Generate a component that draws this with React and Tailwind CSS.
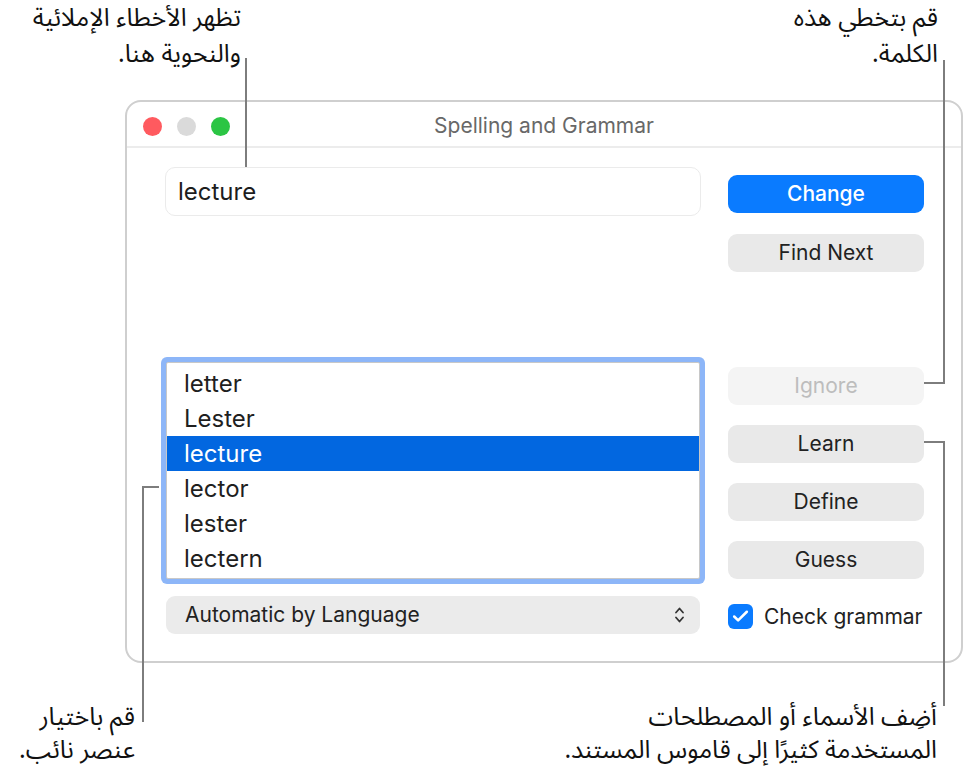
import { Check } from "lucide-react";

const ui = { fontFamily: "Inter, 'Liberation Sans', sans-serif" };
const ar = { fontFamily: "'Noto Sans Arabic', 'DejaVu Sans', sans-serif" };

const suggestions = ["letter", "Lester", "lecture", "lector", "lester", "lectern"];

function MacButton({ children, primary, disabled, className = "" }) {
  let tone = "bg-[#e9e9e9] text-[#222]";
  if (primary) tone = "bg-[#0a7bff] text-white font-medium";
  if (disabled) tone = "bg-[#f4f4f4] text-[#bdbdbd]";

  return (
    <div
      className={`flex h-[38px] w-[196px] items-center justify-center rounded-[9px] text-[21px] ${tone} ${className}`}
    >
      {children}
    </div>
  );
}

function Callouts() {
  return (
    <div className="pointer-events-none absolute inset-0" style={ar}>
      {/* labels */}
      <div dir="rtl" className="absolute right-[727px] top-0 text-right text-[25px] leading-[36px] text-[#111]">
        <p>تظهر الأخطاء الإملائية</p>
        <p>والنحوية هنا.</p>
      </div>
      <div dir="rtl" className="absolute right-[30px] top-0 text-right text-[25px] leading-[36px] text-[#111]">
        <p>قم بتخطي هذه</p>
        <p>الكلمة.</p>
      </div>
      <div dir="rtl" className="absolute right-[833px] top-[701px] text-right text-[25px] leading-[33px] text-[#111]">
        <p>قم باختيار</p>
        <p>عنصر نائب.</p>
      </div>
      <div dir="rtl" className="absolute right-[31px] top-[701px] text-right text-[25px] leading-[33px] text-[#111]">
        <p>أضِف الأسماء أو المصطلحات</p>
        <p>المستخدمة كثيرًا إلى قاموس المستند.</p>
      </div>

      {/* leader lines */}
      <div className="absolute left-[245px] top-[58px] h-[109px] w-[2px] bg-[#7d7d7d]" />
      <div className="absolute left-[943px] top-[60px] h-[324px] w-[2px] bg-[#7d7d7d]" />
      <div className="absolute left-[924px] top-[382px] h-[2px] w-[21px] bg-[#7d7d7d]" />
      <div className="absolute left-[924px] top-[441px] h-[2px] w-[21px] bg-[#7d7d7d]" />
      <div className="absolute left-[943px] top-[441px] h-[265px] w-[2px] bg-[#7d7d7d]" />
      <div className="absolute left-[142px] top-[486px] h-[2px] w-[17px] bg-[#7d7d7d]" />
      <div className="absolute left-[142px] top-[486px] h-[236px] w-[2px] bg-[#7d7d7d]" />
    </div>
  );
}

export default function App() {
  return (
    <div className="relative h-[771px] w-[968px] overflow-hidden bg-white pl-[125px] pt-[100px]" style={ui}>
      <div className="flex h-[563px] w-[838px] flex-col rounded-[16px] border-2 border-[#cfcfcf] bg-white">
        {/* title bar */}
        <div className="relative flex h-[46px] items-center border-b-2 border-[#ececec] pl-[16px] pt-[4px]">
          <div className="flex gap-[15px]">
            <span className="h-[19px] w-[19px] rounded-full bg-[#ff5a5f]" />
            <span className="h-[19px] w-[19px] rounded-full bg-[#dadada]" />
            <span className="h-[19px] w-[19px] rounded-full bg-[#2bc544]" />
          </div>
          <div className="absolute inset-0 flex items-center justify-center pt-[4px] text-[21px] text-[#686868]">
            Spelling and Grammar
          </div>
        </div>

        <div className="flex pl-[38px] pt-[19px]">
          {/* left column */}
          <div className="flex w-[536px] flex-col">
            <div className="flex h-[49px] items-center rounded-[10px] border border-[#ebebeb] px-[12px] text-[24px] text-[#1d1d1d]">
              lecture
            </div>

            <div className="mx-px mt-[146px] rounded-[2px] border border-[#c8c8c8] bg-white pt-[3px] pb-[2px] ring-[5px] ring-[#8db6f8]">
              {suggestions.map((word, i) => (
                <div
                  key={word}
                  className={`flex h-[35px] items-center pl-[17px] text-[24px] ${
                    i === 2 ? "bg-[#0267e0] text-white" : "text-[#1f1f1f]"
                  }`}
                >
                  {word}
                </div>
              ))}
            </div>

            <div className="mx-px mt-[17px] flex h-[38px] items-center justify-between rounded-[9px] bg-[#ebebeb] pl-[19px] pr-[15px] text-[21px] text-[#222]">
              <span>Automatic by Language</span>
              <svg width="11" height="18" viewBox="0 0 11 18" fill="none" stroke="#333" strokeWidth="1.8" strokeLinecap="round" strokeLinejoin="round">
                <path d="M2 6.5 L5.5 2.5 L9 6.5" />
                <path d="M2 11.5 L5.5 15.5 L9 11.5" />
              </svg>
            </div>
          </div>

          {/* right column */}
          <div className="ml-[27px] flex flex-col">
            <MacButton primary className="mt-[8px] h-[37px]">Change</MacButton>
            <MacButton className="mt-[21px]">Find Next</MacButton>
            <MacButton disabled className="mt-[95px]">Ignore</MacButton>
            <MacButton className="mt-[20px]">Learn</MacButton>
            <MacButton className="mt-[20px]">Define</MacButton>
            <MacButton className="mt-[20px]">Guess</MacButton>
            <div className="mt-[22px] flex items-center gap-[11px]">
              <span className="flex h-[25px] w-[25px] items-center justify-center rounded-[6px] bg-[#0a7bff]">
                <Check size={19} strokeWidth={3.2} color="white" />
              </span>
              <span className="text-[21px] text-[#222]">Check grammar</span>
            </div>
          </div>
        </div>
      </div>

      <Callouts />
    </div>
  );
}
